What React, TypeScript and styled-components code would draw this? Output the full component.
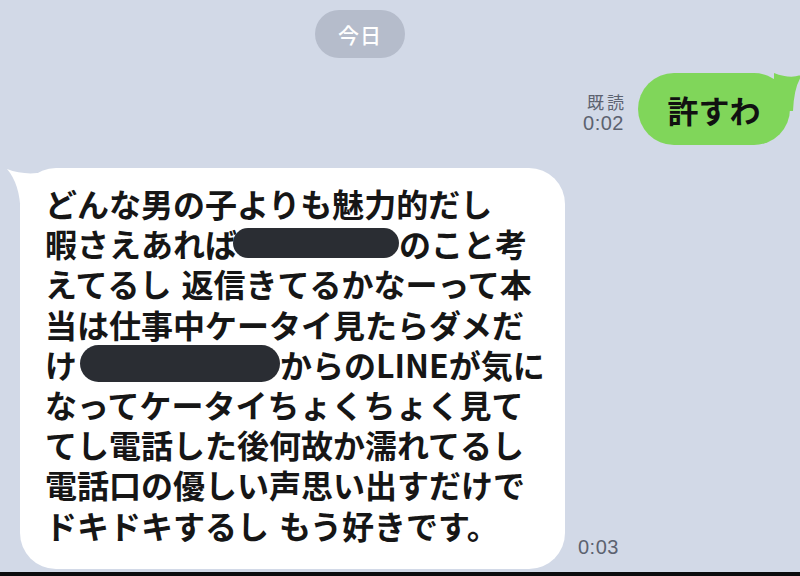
import React from 'react';
import styled, { createGlobalStyle } from 'styled-components';

const GlobalStyle = createGlobalStyle`
  html, body {
    margin: 0;
    padding: 0;
    background: #d2d9e7;
  }
  body {
    font-family: "Noto Sans CJK JP", "Noto Sans", sans-serif;
  }
`;

const Screen = styled.div`
  width: 800px;
  height: 576px;
  overflow: hidden;
  background: #d2d9e7;
  display: flex;
  flex-direction: column;
  box-sizing: border-box;
  border-bottom: 4px solid #0c0c0e;
`;

const DateRow = styled.div`
  display: flex;
  padding: 10px 0 0 315px;
`;

const DatePill = styled.div`
  width: 90px;
  height: 48px;
  border-radius: 24px;
  background: #b5bccb;
  color: #ffffff;
  font-size: 21px;
  font-weight: 500;
  display: flex;
  align-items: center;
  justify-content: center;
  letter-spacing: 1px;
`;

const OutRow = styled.div`
  display: flex;
  justify-content: flex-end;
  align-items: flex-end;
  gap: 14px;
  margin-top: 15px;
  padding-right: 10px;
`;

const Meta = styled.div<{ align?: 'left' | 'right' }>`
  display: flex;
  flex-direction: column;
  align-items: ${({ align }) => (align === 'left' ? 'flex-start' : 'flex-end')};
  color: #5c6270;
  line-height: 1.15;
  padding-bottom: 10px;
`;

const ReadMark = styled.span`
  font-size: 17px;
  letter-spacing: 3px;
  margin-right: -3px;
`;

const Time = styled.span`
  font-size: 20px;
  font-family: "Liberation Sans", "Noto Sans", sans-serif;
  letter-spacing: 0.5px;
`;

const GreenBubble = styled.div`
  position: relative;
  width: 152px;
  height: 72px;
  border-radius: 36px;
  background: #80d65a;
  display: flex;
  align-items: center;
  justify-content: center;
  font-size: 31px;
  font-weight: 700;
  color: #111;
`;

const Tail = styled.svg<{ side: 'left' | 'right' }>`
  position: absolute;
  top: 0;
  ${({ side }) => (side === 'left' ? 'left: -20px;' : 'right: -12px;')}
  z-index: 0;
`;

const BubbleText = styled.span`
  position: relative;
  z-index: 1;
`;

const InRow = styled.div`
  display: flex;
  align-items: flex-end;
  gap: 13px;
  margin-top: 23px;
  padding-left: 20px;
`;

const WhiteBubble = styled.div`
  position: relative;
  width: 545px;
  box-sizing: border-box;
  background: #ffffff;
  border-radius: 36px;
  padding: 15px 0 24px 25px;
`;

const Lines = styled.div`
  position: relative;
  z-index: 1;
  font-size: 32px;
  font-weight: 700;
  line-height: 40.2px;
  color: #161616;
`;

const Line = styled.div`
  white-space: nowrap;
  display: flex;
  align-items: center;
`;

const Redact = styled.span<{ w: number; h: number; shift?: number }>`
  display: inline-block;
  width: ${({ w }) => w}px;
  height: ${({ h }) => h}px;
  border-radius: ${({ h }) => h / 2}px;
  background: #2a2d33;
  margin-left: ${({ shift }) => shift ?? 0}px;
  flex-shrink: 0;
`;

const Gap = styled.span`
  display: inline-block;
  width: 10px;
`;

export default function App() {
  return (
    <>
      <GlobalStyle />
      <Screen>
        <DateRow>
          <DatePill>今日</DatePill>
        </DateRow>

        <OutRow>
          <Meta>
            <ReadMark>既読</ReadMark>
            <Time>0:02</Time>
          </Meta>
          <GreenBubble>
            <Tail side="right" width="30" height="40" viewBox="0 0 30 40">
              <path d="M2 0 Q 20 7 31 1 Q 22 12 21 38 L 2 38 Z" fill="#80d65a" />
            </Tail>
            <BubbleText>許すわ</BubbleText>
          </GreenBubble>
        </OutRow>

        <InRow>
          <WhiteBubble>
            <Tail side="left" width="60" height="46" viewBox="0 0 60 46">
              <path d="M58 0.5 Q 30 10 7 1 Q 20 16 20.5 44 L 58 44 Z" fill="#ffffff" />
            </Tail>
            <Lines>
              <Line>どんな男の子よりも魅力的だし</Line>
              <Line>
                暇さえあれば<Redact w={166} h={30} shift={-4} />のこと考
              </Line>
              <Line>
                えてるし<Gap />返信きてるかなーって本
              </Line>
              <Line>当は仕事中ケータイ見たらダメだ</Line>
              <Line>
                け<Redact w={200} h={37} shift={3} />からのLINEが気に
              </Line>
              <Line>なってケータイちょくちょく見て</Line>
              <Line>てし電話した後何故か濡れてるし</Line>
              <Line>電話口の優しい声思い出すだけで</Line>
              <Line>
                ドキドキするし<Gap />もう好きです。
              </Line>
            </Lines>
          </WhiteBubble>
          <Meta align="left">
            <Time>0:03</Time>
          </Meta>
        </InRow>
      </Screen>
    </>
  );
}
